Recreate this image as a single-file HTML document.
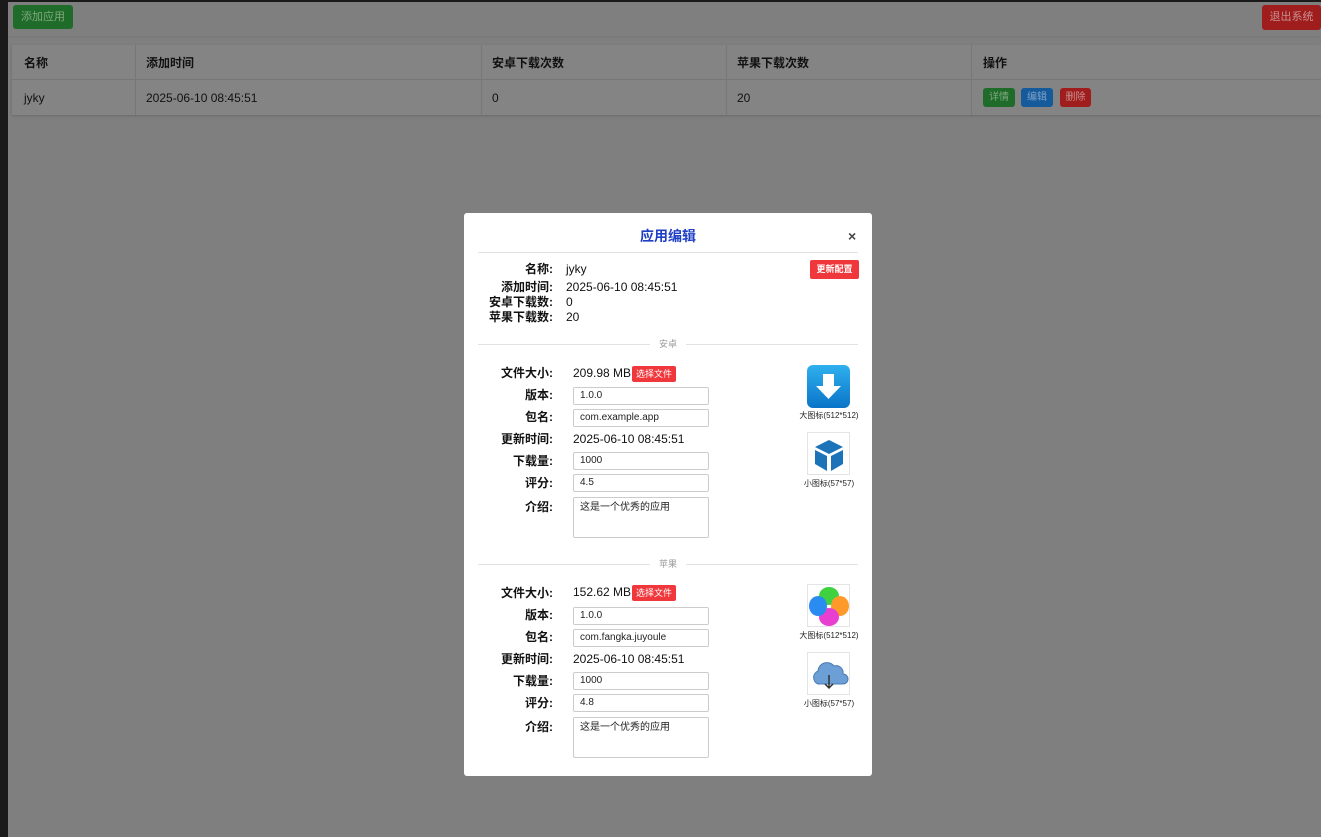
<!DOCTYPE html>
<html><head><meta charset="utf-8"><style>
*{box-sizing:border-box;margin:0;padding:0}
html,body{width:1321px;height:837px;overflow:hidden;background:#7f7f7f}
body{font-family:"Liberation Sans","Noto Sans CJK SC",sans-serif;position:relative;line-height:14px}
.a{position:absolute}
.btn{position:absolute;font-size:11px;border-radius:3px;text-align:center}
.t{position:absolute;font-size:12px;color:#111;white-space:nowrap;line-height:14px}
.lab{position:absolute;font-size:12px;font-weight:bold;color:#111;text-align:right;width:90px;white-space:nowrap;line-height:14px}
.val{position:absolute;font-size:12px;color:#111;white-space:nowrap;line-height:14px}
.inp{position:absolute;left:573px;width:136px;height:18px;border:1px solid #ccc;border-radius:2px;font-size:10px;line-height:14px;padding:1px 6px;color:#222;background:#fff}
.red{position:absolute;background:#f0383c;color:#fff;font-size:9px;border-radius:2px;text-align:center}
.ib{position:absolute;left:807px;width:43px;height:43px;border:1px solid #e4e4e4;background:#fff;overflow:hidden}
.il{position:absolute;left:790px;width:78px;text-align:center;font-size:8px;color:#222;line-height:10px}
.hr{position:absolute;left:478px;width:380px;height:1px;background:#e2e2e2}
.sec{position:absolute;left:650px;width:36px;text-align:center;background:#fff;font-size:9px;color:#999;line-height:12px}
</style></head><body>
<div class="a" style="left:0;top:0;width:8px;height:837px;background:#1a1a1a"></div>
<div class="a" style="left:0;top:0;width:1321px;height:2px;background:#1a1a1a"></div>
<div class="btn" style="left:13px;top:5px;width:60px;height:24px;line-height:24px;background:#1f6b2a;color:#7fa87f">添加应用</div>
<div class="btn" style="left:1262px;top:5px;width:59px;height:25px;line-height:25px;background:#a01d1d;color:#c89090">退出系统</div>
<div class="a" style="left:8px;top:36px;width:1313px;height:2px;background:#7a7a7a"></div>
<div class="a" style="left:12px;top:45px;width:1309px;height:70px;background:#848484;box-shadow:0 1px 2px #6a6a6a"></div>
<div class="a" style="left:12px;top:79px;width:1309px;height:1px;background:#767676"></div>
<div class="a" style="left:135px;top:45px;width:1px;height:70px;background:#777"></div>
<div class="a" style="left:481px;top:45px;width:1px;height:70px;background:#777"></div>
<div class="a" style="left:726px;top:45px;width:1px;height:70px;background:#777"></div>
<div class="a" style="left:971px;top:45px;width:1px;height:70px;background:#777"></div>
<div class="t" style="left:24px;top:56px;font-weight:bold">名称</div>
<div class="t" style="left:146px;top:56px;font-weight:bold">添加时间</div>
<div class="t" style="left:492px;top:56px;font-weight:bold">安卓下载次数</div>
<div class="t" style="left:737px;top:56px;font-weight:bold">苹果下载次数</div>
<div class="t" style="left:983px;top:56px;font-weight:bold">操作</div>
<div class="t" style="left:24px;top:91px">jyky</div>
<div class="t" style="left:146px;top:91px">2025-06-10 08:45:51</div>
<div class="t" style="left:492px;top:91px">0</div>
<div class="t" style="left:737px;top:91px">20</div>
<div class="btn" style="left:983px;top:88px;width:32px;height:19px;line-height:19px;background:#1f6b2a;color:#7fa87f;font-size:10px">详情</div>
<div class="btn" style="left:1021px;top:88px;width:32px;height:19px;line-height:19px;background:#155a9a;color:#7fa0c8;font-size:10px">编辑</div>
<div class="btn" style="left:1060px;top:88px;width:31px;height:19px;line-height:19px;background:#a01d1d;color:#c89090;font-size:10px">删除</div>

<div class="a" style="left:464px;top:213px;width:408px;height:563px;background:#fff;border-radius:3px"></div>
<div class="t" style="left:600px;top:228px;width:136px;text-align:center;color:#1f3fc4;font-weight:bold;font-size:14px;line-height:16px">应用编辑</div>
<div class="t" style="left:848px;top:228px;font-size:14px;color:#444;font-weight:bold;line-height:16px">×</div>
<div class="hr" style="top:252px"></div>
<div class="lab" style="left:463px;top:262px">名称:</div><div class="val" style="left:566px;top:262px">jyky</div>
<div class="lab" style="left:463px;top:280px">添加时间:</div><div class="val" style="left:566px;top:280px">2025-06-10 08:45:51</div>
<div class="lab" style="left:463px;top:295px">安卓下载数:</div><div class="val" style="left:566px;top:295px">0</div>
<div class="lab" style="left:463px;top:310px">苹果下载数:</div><div class="val" style="left:566px;top:310px">20</div>
<div class="red" style="left:810px;top:260px;width:49px;height:19px;line-height:19px;font-weight:bold">更新配置</div>

<div class="hr" style="top:344px"></div><div class="sec" style="top:338px">安卓</div>
<div class="lab" style="left:463px;top:366px">文件大小:</div><div class="val" style="left:573px;top:366px">209.98 MB</div>
<div class="red" style="left:632px;top:366px;width:44px;height:16px;line-height:16px">选择文件</div>
<div class="lab" style="left:463px;top:388px">版本:</div><div class="inp" style="top:387px">1.0.0</div>
<div class="lab" style="left:463px;top:410px">包名:</div><div class="inp" style="top:409px">com.example.app</div>
<div class="lab" style="left:463px;top:432px">更新时间:</div><div class="val" style="left:573px;top:432px">2025-06-10 08:45:51</div>
<div class="lab" style="left:463px;top:454px">下载量:</div><div class="inp" style="top:452px">1000</div>
<div class="lab" style="left:463px;top:476px">评分:</div><div class="inp" style="top:474px">4.5</div>
<div class="lab" style="left:463px;top:500px">介绍:</div><div class="inp" style="top:497px;height:41px;padding-top:3px">这是一个优秀的应用</div>
<div class="ib" style="top:365px;border:none"><svg width="43" height="43"><defs><linearGradient id="g" x1="0" y1="0" x2="0" y2="1"><stop offset="0" stop-color="#2fb0ee"/><stop offset="1" stop-color="#0a74c8"/></linearGradient></defs><rect width="43" height="43" rx="6" fill="url(#g)"/><path d="M16 9h11v12h7L21.5 34 9 21h7z" fill="#fff"/></svg></div>
<div class="il" style="top:411px">大图标(512*512)</div>
<div class="ib" style="top:432px"><svg width="43" height="43"><path d="M21 7 35 14 21 21 7 14z" fill="#1d73b8"/><path d="M7 17 19 23v15L7 31z" fill="#1d73b8"/><path d="M35 17 23 23v15l12-7z" fill="#1d73b8"/></svg></div>
<div class="il" style="top:479px">小图标(57*57)</div>

<div class="hr" style="top:564px"></div><div class="sec" style="top:558px">苹果</div>
<div class="lab" style="left:463px;top:586px">文件大小:</div><div class="val" style="left:573px;top:585px">152.62 MB</div>
<div class="red" style="left:632px;top:585px;width:44px;height:16px;line-height:16px">选择文件</div>
<div class="lab" style="left:463px;top:608px">版本:</div><div class="inp" style="top:607px">1.0.0</div>
<div class="lab" style="left:463px;top:630px">包名:</div><div class="inp" style="top:629px">com.fangka.juyoule</div>
<div class="lab" style="left:463px;top:652px">更新时间:</div><div class="val" style="left:573px;top:652px">2025-06-10 08:45:51</div>
<div class="lab" style="left:463px;top:674px">下载量:</div><div class="inp" style="top:672px">1000</div>
<div class="lab" style="left:463px;top:696px">评分:</div><div class="inp" style="top:694px">4.8</div>
<div class="lab" style="left:463px;top:720px">介绍:</div><div class="inp" style="top:717px;height:41px;padding-top:3px">这是一个优秀的应用</div>
<div class="ib" style="top:584px"><svg width="43" height="43"><ellipse cx="21" cy="11" rx="10" ry="9" fill="#3fd13f"/><ellipse cx="32" cy="21" rx="9" ry="10" fill="#ff9a2a"/><ellipse cx="21" cy="32" rx="10" ry="9" fill="#e83fd0"/><ellipse cx="10" cy="21" rx="9" ry="10" fill="#2a8cf0"/></svg></div>
<div class="il" style="top:631px">大图标(512*512)</div>
<div class="ib" style="top:652px"><svg width="43" height="43"><path d="M10 31a7 7 0 0 1 0-13 9 9 0 0 1 16-5 7 7 0 0 1 9 8 5 5 0 0 1 0 10z" fill="#6b9fd6" stroke="#4a7bb0"/><path d="M21 22v13M17 31l4 4 4-4" stroke="#333" stroke-width="1.5" fill="none"/></svg></div>
<div class="il" style="top:699px">小图标(57*57)</div>
</body></html>
